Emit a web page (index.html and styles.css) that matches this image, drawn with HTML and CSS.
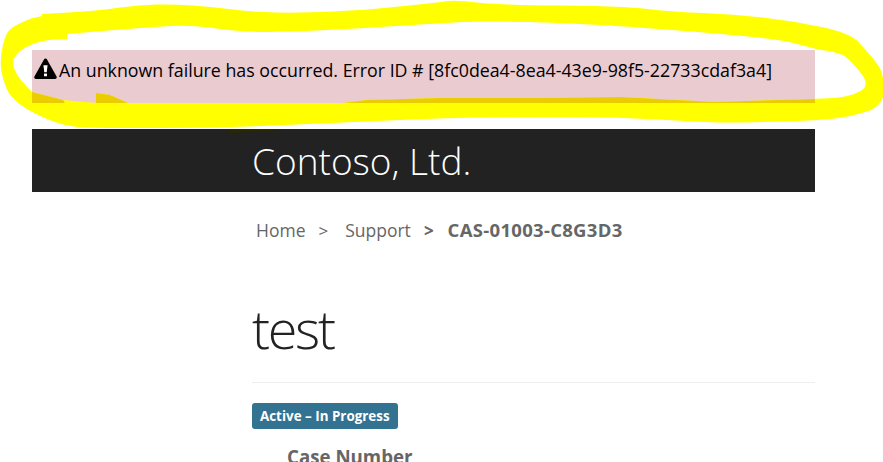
FILE: index.html
```html
<!DOCTYPE html>
<html lang="en">
<head>
<meta charset="utf-8">
<title>Contoso, Ltd.</title>
<link rel="stylesheet" href="styles.css">
</head>
<body>
<div class="page">
  <div class="alert">
    <svg class="alert-icon" viewBox="0 0 24 22" width="23" height="21" aria-hidden="true">
      <path d="M12 0.5c.7 0 1.3.4 1.6 1l10 18c.6 1.1-.2 2.5-1.6 2.5H2c-1.4 0-2.2-1.4-1.6-2.5l10-18c.3-.6.9-1 1.6-1z" fill="#000"/>
      <path d="M9.8 7.5h4.4l-.9 7.5h-2.6z" fill="#fff"/>
      <rect x="10.4" y="16.2" width="3.2" height="3" rx=".6" fill="#fff"/>
    </svg>
    <span class="alert-text">An unknown failure has occurred. Error ID # [8fc0dea4-8ea4-43e9-98f5-22733cdaf3a4]</span>
  </div>
  <header class="brand-bar">
    <div class="brand">Contoso, Ltd.</div>
  </header>
  <main class="content">
    <nav class="crumbs">
      <a class="crumb">Home</a><span class="sep">&gt;</span><a class="crumb">Support</a><span class="sep sep-bold">&gt;</span><strong class="crumb-current">CAS-01003-C8G3D3</strong>
    </nav>
    <h1 class="title">test</h1>
    <span class="badge">Active – In Progress</span>
    <h2 class="field-label">Case Number</h2>
  </main>
</div>
<svg class="scribble" viewBox="0 0 883 462" width="883" height="462" aria-hidden="true">
  <path fill="#ffff00" fill-rule="evenodd" d="M1.5 53 Q3 43 5.5 36.5 Q8 30 14 26.5 Q20 23 31 18.5 L42 16 L42 14 Q100 11 120 7.5 Q140 5 156.5 4.5 Q173 4 193 5.5 Q213 7 233 9.5 Q253 12 276.5 12.5 Q300 13 333.5 11.5 Q367 10 404.5 6 Q442 2 448.5 1 Q455 0 481.5 3 Q508 5 564.5 5.5 Q621 6 647.5 9 Q674 12 703.5 13 Q733 14 763 17.5 Q793 21 821.5 27 Q850 33 858 41.5 Q866 50 873 58.5 Q880 67 881.5 72 Q884 80 884 90 Q884 107 865 112 Q850 117 835 118.5 Q820 120 796.5 121 Q773 122 743.5 122.5 Q714 123 666 120 Q618 117 563 117 Q508 117 475 117.5 Q442 118 387.5 120.5 Q333 123 273 125.5 Q213 128 156.5 128 Q100 128 83.5 127.5 Q67 127 49.5 120 Q32 113 21 105 Q10 97 6.5 88.5 Q3 80 1.5 71.5 Q0 63 1.5 53 Z
  M67 34 L108.5 30.5 Q150 27 171.5 26 Q193 25 220 29 Q247 33 290 31.5 Q333 30 387.5 26.5 Q442 23 463 22 Q484 21 529 22 Q574 23 624 26.5 Q674 30 703.5 32.5 Q733 35 758 37.5 Q783 40 799 44.5 Q815 49 827.5 51 Q840 53 845 56.5 Q850 60 860 72 Q871 85 860.5 91 Q850 97 832.5 98 Q815 99 714 102 L621 97 L541 98 L441 98 L367 100 L343 103 L128 103 L110 95 L96 93 L96 103 L63 100 L32 92 Q20 80 16.5 73.5 Q13 67 13 62.5 Q13 58 18 53 Q23 48 33 44 Q43 40 55 39.5 L67 39 Z"/>
  <path fill="#ebcc00" d="M32 92 L63 100 L65 103 L32 103 Z M96 93 L110 95 L128 103 L96 103 Z M343 103 L367 100 L441 98 L541 98 L621 97 L714 102 L815 99 L815 103 Z"/>
  <path fill="#2a2800" d="M230 129 L285 129 L270 131 L230 133 Z"/>
</svg>
</body>
</html>
```
FILE: styles.css
```css
html, body {
  margin: 0;
  padding: 0;
  height: 100%;
  overflow: hidden;
  background: #fff;
}

body {
  position: relative;
  font-family: "Open Sans", "Liberation Sans", sans-serif;
}

.page {
  width: 783px;
  margin-left: 32px;
  padding-top: 50px;
}

.alert {
  position: relative;
  z-index: 2;
  height: 53px;
  box-sizing: border-box;
  padding: 8px 0 0 2px;
  display: flex;
  align-items: flex-start;
  gap: 2px;
  background: #eacbd0;
  color: #000;
}

.alert-icon {
  flex: none;
}

.alert-text {
  font-size: 17.8px;
  line-height: 25px;
  white-space: nowrap;
}

.brand-bar {
  margin-top: 26px;
  height: 63px;
  padding-left: 220px;
  background: #222;
}

.brand {
  color: #fff;
  font-weight: 300;
  font-size: 37px;
  line-height: 63px;
  white-space: nowrap;
}

.content {
  padding-left: 220px;
}

.crumbs {
  margin: 25px 0 0 4px;
  display: flex;
  align-items: baseline;
  font-size: 17.5px;
  line-height: 26px;
  color: #666;
  white-space: nowrap;
}

.sep {
  margin: 0 17px 0 13px;
  font-size: 17px;
}

.sep-bold {
  margin: 0 14px 0 13px;
  font-weight: 700;
}

.crumb-current {
  font-size: 18.5px;
  letter-spacing: 0.3px;
  font-weight: 700;
}

.title {
  margin: 48px 0 0;
  padding-bottom: 18px;
  border-bottom: 1px solid #eee;
  font-weight: 300;
  font-size: 54px;
  line-height: 72px;
  letter-spacing: -2.3px;
  color: #222;
}

.badge {
  display: inline-block;
  margin-top: 20px;
  padding: 0 8px;
  height: 26px;
  line-height: 26px;
  border-radius: 3px;
  background: #337290;
  color: #fff;
  font-size: 13.4px;
  font-weight: 700;
  white-space: nowrap;
}

.field-label {
  margin: 16px 0 0 35px;
  font-size: 18.7px;
  font-weight: 700;
  line-height: 24px;
  color: #666;
  white-space: nowrap;
}

.scribble {
  position: absolute;
  left: 0;
  top: 0;
  z-index: 3;
  pointer-events: none;
}
```
